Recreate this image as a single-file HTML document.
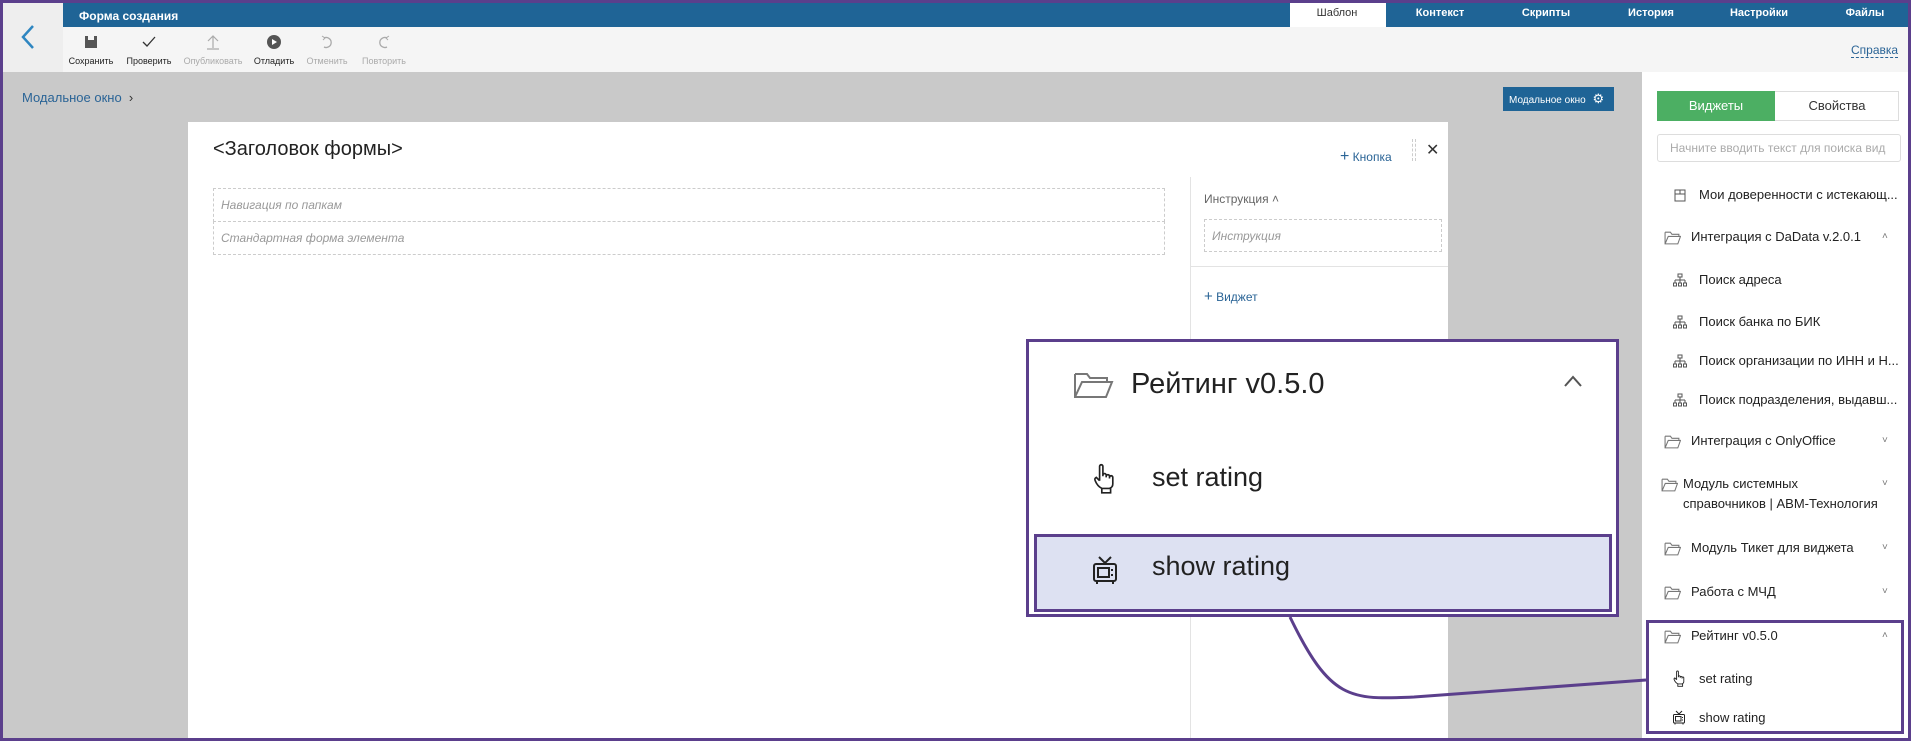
<!DOCTYPE html>
<html><head><meta charset="utf-8"><style>
*{margin:0;padding:0;box-sizing:border-box}
body{width:1911px;height:741px;position:relative;overflow:hidden;font-family:"Liberation Sans",sans-serif;background:#c9c9c9}
.a{position:absolute;white-space:nowrap}
.tab{position:absolute;top:0;height:27px;line-height:27px;color:#fff;font-size:11px;font-weight:bold;transform:translateX(-50%)}
.tb{position:absolute;top:34px;width:60px;text-align:center;font-size:9px;transform:translateX(-50%)}
.tb svg{display:block;margin:0 auto 6px}
.li{position:absolute;font-size:13px;color:#222}
.chev{position:absolute;left:1882px;font-size:10px;color:#777}
.ic{position:absolute}
</style></head><body>
<svg width="0" height="0" style="position:absolute"><defs>
<symbol id="fold" viewBox="0 0 16 14"><path d="M1 2 H6 L7.5 4 H14 V6 M1 2 V13 H13 L15.5 6 H4 L1 13" stroke="#777" stroke-width="1" fill="none"/></symbol>
<symbol id="org" viewBox="0 0 14 14"><rect x="5" y="1" width="4" height="3" stroke="#555" fill="none"/><path d="M7 4 V7 M2 7 H12 M2 7 V10 M7 7 V10 M12 7 V10" stroke="#555" fill="none"/><rect x="0.5" y="10" width="3" height="3" stroke="#555" fill="none"/><rect x="5.5" y="10" width="3" height="3" stroke="#555" fill="none"/><rect x="10.5" y="10" width="3" height="3" stroke="#555" fill="none"/></symbol>
<symbol id="hand" viewBox="0 0 20 28"><path d="M6 16 V3 a1.5 1.5 0 0 1 3 0 V12 M9 11 a1.5 1.5 0 0 1 3 0 V13 M12 12 a1.5 1.5 0 0 1 3 0 V14 M15 13 a1.5 1.5 0 0 1 3 0 V19 Q18 22 15 23 H8 Q4 21 2 16 Q1 14 3 13 L6 16 M8 23 V27 H16 V23" stroke="#222" stroke-width="1.5" fill="none"/></symbol>
<symbol id="tv" viewBox="0 0 28 30"><path d="M8 2 L14 8 L20 2" stroke="#222" stroke-width="2" fill="none"/><rect x="3" y="9" width="22" height="17" rx="2" stroke="#222" stroke-width="2" fill="none"/><rect x="7" y="13" width="11" height="9" stroke="#222" stroke-width="2" fill="none"/><path d="M21 14 V16 M21 19 V21 M6 27 V29 M22 27 V29" stroke="#222" stroke-width="2"/></symbol>
</defs></svg>
<!-- header -->
<div class="a" style="left:0;top:0;width:1911px;height:72px;background:#f5f5f5"></div>
<div class="a" style="left:63px;top:0;width:1848px;height:27px;background:#1f6496"></div>
<div class="a" style="left:0;top:0;width:63px;height:72px;background:#eeeeee"></div>
<svg class="a" style="left:20px;top:24px" width="16" height="26"><path d="M13 2 L3 13 L13 24" stroke="#2e86c1" stroke-width="2.5" fill="none"/></svg>
<div class="a" style="left:79px;top:9px;color:#fff;font-size:12px;font-weight:bold">Форма создания</div>
<div class="a" style="left:1290px;top:1px;width:96px;height:26px;background:#fff"></div>
<div class="tab" style="left:1337px;color:#333;font-weight:normal">Шаблон</div>
<div class="tab" style="left:1440px">Контекст</div>
<div class="tab" style="left:1546px">Скрипты</div>
<div class="tab" style="left:1651px">История</div>
<div class="tab" style="left:1759px">Настройки</div>
<div class="tab" style="left:1865px">Файлы</div>
<div class="tb" style="left:91px;color:#222"><svg width="16" height="16"><rect x="2" y="2" width="12" height="12" fill="#555"/><rect x="5" y="2" width="6" height="4" fill="#f5f5f5"/></svg>Сохранить</div>
<div class="tb" style="left:149px;color:#222"><svg width="16" height="16"><path d="M2 8 L6 12 L14 3" stroke="#333" stroke-width="1.3" fill="none"/></svg>Проверить</div>
<div class="tb" style="left:213px;color:#aaa"><svg width="16" height="16"><path d="M8 14 V2 M3 7 L8 2 L13 7 M2 15 H14" stroke="#aaa" stroke-width="1.2" fill="none"/></svg>Опубликовать</div>
<div class="tb" style="left:274px;color:#222"><svg width="16" height="16"><circle cx="8" cy="8" r="7" fill="#555"/><path d="M6 5 L11 8 L6 11Z" fill="#fff"/></svg>Отладить</div>
<div class="tb" style="left:327px;color:#aaa"><svg width="16" height="16"><path d="M5 4 A5 5 0 1 1 5 13" stroke="#aaa" stroke-width="1.3" fill="none"/><path d="M3 2 L6 4 L4 6" stroke="#aaa" fill="none"/></svg>Отменить</div>
<div class="tb" style="left:384px;color:#aaa"><svg width="16" height="16"><path d="M11 4 A5 5 0 1 0 11 13" stroke="#aaa" stroke-width="1.3" fill="none"/><path d="M13 2 L10 4 L12 6" stroke="#aaa" fill="none"/></svg>Повторить</div>
<div class="a" style="left:1851px;top:43px;font-size:12px;color:#2a6496;border-bottom:1px dashed #2a6496">Справка</div>

<!-- canvas -->
<div class="a" style="left:22px;top:90px;font-size:13px;color:#2a6496">Модальное окно &nbsp;<span style="color:#333">›</span></div>
<div class="a" style="left:1503px;top:87px;width:111px;height:24px;background:#1f6496;color:#fff;font-size:10px;line-height:24px;padding-left:6px">Модальное окно <span style="font-size:13px;margin-left:4px">⚙</span></div>
<div class="a" style="left:188px;top:122px;width:1260px;height:619px;background:#fff"></div>
<div class="a" style="left:213px;top:138px;font-size:20px;color:#222">&lt;Заголовок формы&gt;</div>
<div class="a" style="left:1340px;top:148px;font-size:12px;color:#2a6496"><span style="font-size:16px">+</span> Кнопка</div>
<div class="a" style="left:1412px;top:139px;width:4px;height:22px;border-left:1px dashed #ccc;border-right:1px dashed #ccc"></div>
<div class="a" style="left:1426px;top:140px;font-size:16px;color:#333">✕</div>
<div class="a" style="left:213px;top:188px;width:952px;height:34px;border:1px dashed #ccc;font-size:12px;font-style:italic;color:#999;padding:9px 7px">Навигация по папкам</div>
<div class="a" style="left:213px;top:221px;width:952px;height:34px;border:1px dashed #ccc;font-size:12px;font-style:italic;color:#999;padding:9px 7px">Стандартная форма элемента</div>
<div class="a" style="left:1190px;top:177px;width:1px;height:564px;background:#e3e3e3"></div>
<div class="a" style="left:1204px;top:192px;font-size:12px;color:#666">Инструкция ˄</div>
<div class="a" style="left:1204px;top:219px;width:238px;height:33px;border:1px dashed #ccc;font-size:12px;font-style:italic;color:#999;padding:9px 7px">Инструкция</div>
<div class="a" style="left:1190px;top:266px;width:258px;height:1px;background:#e3e3e3"></div>
<div class="a" style="left:1204px;top:288px;font-size:12px;color:#2a6496"><span style="font-size:15px">+</span> Виджет</div>

<!-- right panel -->
<div class="a" style="left:1642px;top:72px;width:269px;height:669px;background:#fff"></div>
<div class="a" style="left:1657px;top:91px;width:242px;height:30px;border:1px solid #ddd"></div>
<div class="a" style="left:1657px;top:91px;width:118px;height:30px;background:#4caf63;color:#fff;font-size:13px;line-height:30px;text-align:center">Виджеты</div>
<div class="a" style="left:1775px;top:91px;width:124px;height:30px;color:#333;font-size:13px;line-height:30px;text-align:center">Свойства</div>
<div class="a" style="left:1657px;top:134px;width:244px;height:28px;border:1px solid #ddd;border-radius:3px;font-size:12px;color:#aaa;line-height:26px;padding-left:12px;overflow:hidden">Начните вводить текст для поиска вид</div>

<svg class="ic" style="left:1673px;top:188px" width="14" height="14"><path d="M2 13 V2 H12 V13 Z M2 6 H12 M7 2 V6" stroke="#555" fill="none"/></svg>
<div class="li" style="left:1699px;top:187px">Мои доверенности с истекающ...</div>
<svg class="ic" style="left:1664px;top:230px" width="17" height="15"><use href="#fold"/></svg>
<div class="li" style="left:1691px;top:229px">Интеграция с DaData v.2.0.1</div><div class="chev" style="top:231px">˄</div>
<svg class="ic" style="left:1673px;top:273px" width="14" height="14"><use href="#org"/></svg><div class="li" style="left:1699px;top:272px">Поиск адреса</div>
<svg class="ic" style="left:1673px;top:315px" width="14" height="14"><use href="#org"/></svg><div class="li" style="left:1699px;top:314px">Поиск банка по БИК</div>
<svg class="ic" style="left:1673px;top:354px" width="14" height="14"><use href="#org"/></svg><div class="li" style="left:1699px;top:353px">Поиск организации по ИНН и Н...</div>
<svg class="ic" style="left:1673px;top:393px" width="14" height="14"><use href="#org"/></svg><div class="li" style="left:1699px;top:392px">Поиск подразделения, выдавш...</div>
<svg class="ic" style="left:1664px;top:434px" width="17" height="15"><use href="#fold"/></svg>
<div class="li" style="left:1691px;top:433px">Интеграция с OnlyOffice</div><div class="chev" style="top:435px">˅</div>
<svg class="ic" style="left:1661px;top:477px" width="17" height="15"><use href="#fold"/></svg>
<div class="li" style="left:1683px;top:476px">Модуль системных</div>
<div class="li" style="left:1683px;top:496px">справочников | ABM-Технология</div><div class="chev" style="top:478px">˅</div>
<svg class="ic" style="left:1664px;top:541px" width="17" height="15"><use href="#fold"/></svg>
<div class="li" style="left:1691px;top:540px">Модуль Тикет для виджета</div><div class="chev" style="top:542px">˅</div>
<svg class="ic" style="left:1664px;top:585px" width="17" height="15"><use href="#fold"/></svg>
<div class="li" style="left:1691px;top:584px">Работа с МЧД</div><div class="chev" style="top:586px">˅</div>
<svg class="ic" style="left:1664px;top:629px" width="17" height="15"><use href="#fold"/></svg>
<div class="li" style="left:1691px;top:628px">Рейтинг v0.5.0</div><div class="chev" style="top:630px">˄</div>
<svg class="ic" style="left:1673px;top:670px" width="12" height="17"><use href="#hand"/></svg>
<div class="li" style="left:1699px;top:671px">set rating</div>
<svg class="ic" style="left:1672px;top:710px" width="14" height="15"><use href="#tv"/></svg>
<div class="li" style="left:1699px;top:710px">show rating</div>
<div class="a" style="left:1646px;top:620px;width:258px;height:114px;border:3px solid #5b3f8c"></div>

<!-- callout -->
<svg class="a" style="left:0;top:0" width="1911" height="741"><path d="M1290 617 C1330 700 1350 700 1414 697 L1646 680" stroke="#5b3f8c" stroke-width="3" fill="none"/></svg>
<div class="a" style="left:1026px;top:339px;width:593px;height:278px;background:#fff;border:3px solid #5b3f8c"></div>
<div class="a" style="left:1034px;top:534px;width:578px;height:78px;background:#dde1f2;border:3px solid #5b3f8c"></div>
<svg class="a" style="left:1073px;top:370px" width="42" height="32"><path d="M2 4 H14 L17 8 H34 V12 M2 4 V27 H33 L39 12 H9 L2 27" stroke="#777" stroke-width="2" fill="none"/></svg>
<div class="a" style="left:1131px;top:368px;font-size:29px;color:#222">Рейтинг v0.5.0</div>
<svg class="a" style="left:1563px;top:374px" width="20" height="14"><path d="M2 12 L10 3 L18 12" stroke="#555" stroke-width="2" fill="none"/></svg>
<svg class="a" style="left:1093px;top:463px" width="22" height="31"><use href="#hand"/></svg>
<div class="a" style="left:1152px;top:462px;font-size:27px;color:#222">set rating</div>
<svg class="a" style="left:1091px;top:555px" width="28" height="30"><use href="#tv"/></svg>
<div class="a" style="left:1152px;top:551px;font-size:27px;color:#222">show rating</div>

<!-- outer border -->
<div class="a" style="left:0;top:0;width:1911px;height:741px;border:3px solid #5b3f8c"></div>
</body></html>
